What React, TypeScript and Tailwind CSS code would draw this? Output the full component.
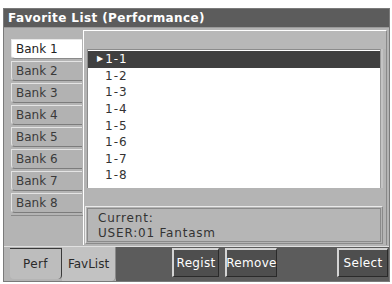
const banks = ['Bank 1', 'Bank 2', 'Bank 3', 'Bank 4', 'Bank 5', 'Bank 6', 'Bank 7', 'Bank 8'];
const items = ['1-1', '1-2', '1-3', '1-4', '1-5', '1-6', '1-7', '1-8'];

const sans = { fontFamily: '"DejaVu Sans", sans-serif' };

function BankTab({ label, active }: { label: string; active: boolean }) {
  return (
    <div
      className={`h-[20px] w-[71px] mb-[2px] pl-[4px] flex items-center text-[12px] leading-none rounded-bl-[4px] border-t border-l border-b ${
        active
          ? 'bg-white border-t-[#e8e8e8] border-l-[#e8e8e8] border-b-[#8a8a8a] text-[#222]'
          : 'bg-[#b2b2b2] border-t-[#e4e4e4] border-l-[#e4e4e4] border-b-[#7c7c7c] text-[#3a3a3a]'
      }`}
    >
      {label}
    </div>
  );
}

function DarkButton({ label, width }: { label: string; width: string }) {
  return (
    <div
      className={`${width} h-[29px] flex items-center justify-center bg-[#4e4e4e] border-t-2 border-l-2 border-t-[#d4d4d4] border-l-[#d4d4d4] border-r border-b border-r-[#2a2a2a] border-b-[#2a2a2a] text-white text-[12px] tracking-[0.3px]`}
    >
      {label}
    </div>
  );
}

export default function App() {
  return (
    <div className="w-[392px] h-[284px] bg-white pt-[8px] pl-[3px] pr-[2px] pb-[2px]" style={sans}>
      <div className="h-full flex flex-col border border-[#7a7a7a] bg-[#b4b4b4]">
        {/* title */}
        <div className="h-[19px] bg-[#5c5c5c] border-b border-[#9a9a9a] flex items-center pl-[4px] text-white font-bold text-[12px] tracking-[0.4px]">
          Favorite List (Performance)
        </div>

        {/* main */}
        <div className="h-[218px] flex">
          <div className="w-[79px] pt-[11px] pl-[7px] flex flex-col">
            {banks.map((b, i) => (
              <BankTab key={b} label={b} active={i === 0} />
            ))}
            <div className="h-px w-[72px] bg-[#8a8a8a]" />
          </div>

          <div className="flex-1 mt-[2px] mb-[1px] mr-[2px] flex flex-col border-t border-l border-white border-r border-r-[#8a8a8a]">
            <div className="h-[18px] bg-[#b8b8b8]" />
            <div className="flex pr-[3px]">
              <div className="ml-[3px] flex-1 h-[139px] bg-white border-t border-l border-[#8c8c8c] pt-[1px] flex flex-col">
                {items.map((it, i) => (
                  <div
                    key={it}
                    className={`h-[16.6px] flex items-center text-[12px] tracking-[1px] ${
                      i === 0 ? 'bg-[#404040] text-white pl-[9px]' : 'text-[#333] pl-[17px]'
                    }`}
                  >
                    {i === 0 && <span className="text-[8px] mr-[1px]">▶</span>}
                    {it}
                  </div>
                ))}
              </div>
              <div className="w-[3px] border-l border-[#9a9a9a] bg-[#c4c4c4]" />
            </div>
            <div className="flex-1 flex flex-col justify-end pb-[1px] pr-[3px]">
              <div className="h-[38px] ml-px border border-[#eaeaea] border-r-[#8a8a8a] border-b-[#8a8a8a] p-px">
                <div className="h-full border border-[#8a8a8a] bg-[#b6b6b6] pl-[10px] pt-[2px] text-[12px] leading-[15px] tracking-[0.8px] text-[#333]">
                  <div>Current:</div>
                  <div>USER:01 Fantasm</div>
                </div>
              </div>
            </div>
          </div>
        </div>

        {/* bottom bar */}
        <div className="flex-1 flex border-t border-[#e0e0e0]">
          <div className="w-[6px]" />
          <div className="w-[52px] mt-[1px] mb-[2px] flex items-center justify-center bg-[#bdbdbd] border-t border-r border-[#3a3a3a] rounded-b-[4px] text-[12px] text-[#2a2a2a] tracking-[0.4px]">
            Perf
          </div>
          <div className="w-[54px] flex items-center justify-center bg-[#c2c2c2] text-[12px] text-[#2a2a2a] rounded-br-[4px] border-r border-[#8a8a8a]">
            FavList
          </div>
          <div className="flex-1 bg-[#5c5c5c] flex items-start pt-[1px] pr-[1px]">
            <div className="w-[56px]" />
            <DarkButton label="Regist" width="w-[47px]" />
            <div className="w-[6px]" />
            <DarkButton label="Remove" width="w-[52px]" />
            <div className="flex-1" />
            <DarkButton label="Select" width="w-[51px]" />
          </div>
        </div>
      </div>
    </div>
  );
}
